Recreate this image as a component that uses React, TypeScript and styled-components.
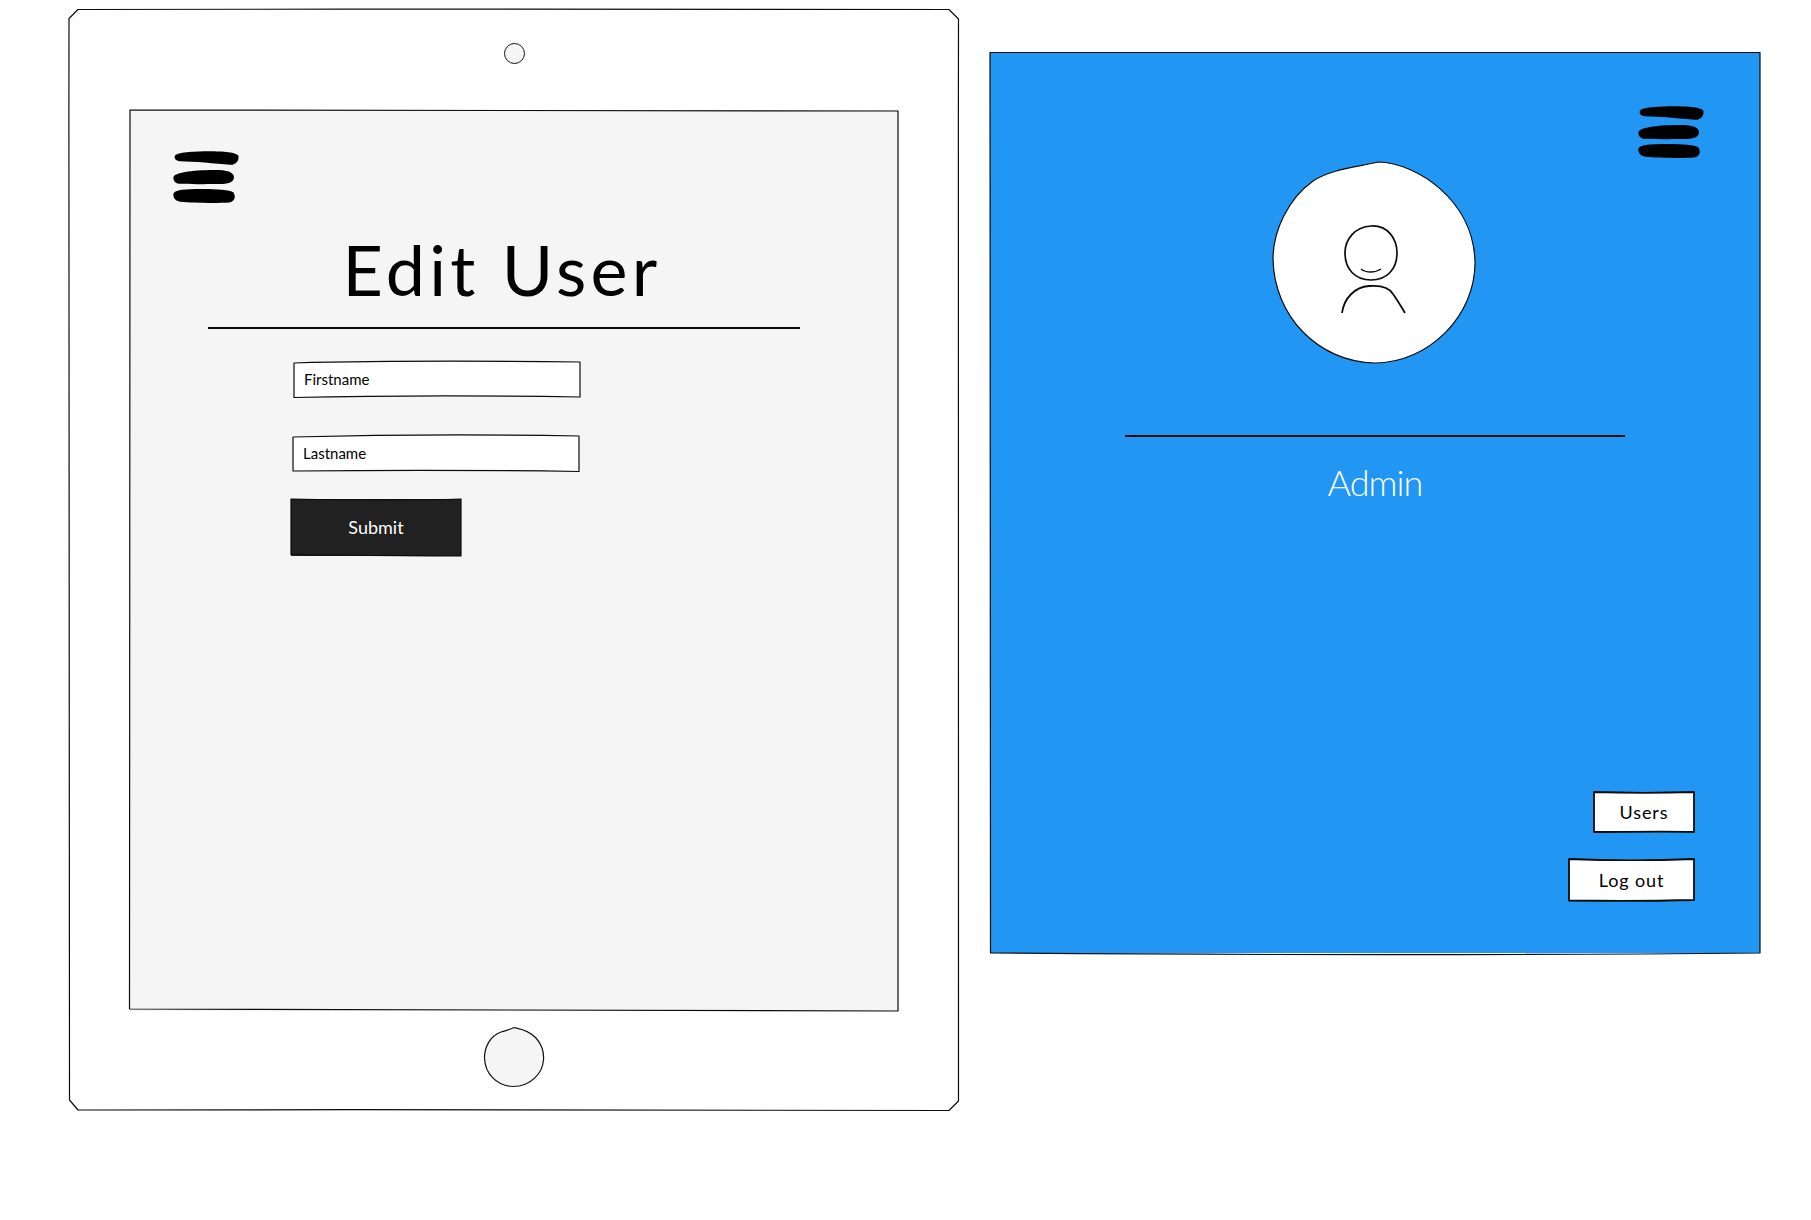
import React from 'react';
import styled, { createGlobalStyle } from 'styled-components';

const GlobalStyle = createGlobalStyle`
  html, body {
    margin: 0;
    background: #fff;
  }
  * {
    box-sizing: border-box;
  }
`;

const handFont = `Lato, 'Open Sans', sans-serif`;

const Page = styled.div`
  display: flex;
  align-items: flex-start;
  gap: 31px;
  width: 1811px;
  height: 1220px;
  padding: 9px 0 0 69px;
  font-family: ${handFont};
`;

const Tablet = styled.div`
  position: relative;
  display: flex;
  flex-direction: column;
  align-items: center;
  width: 890px;
  height: 1101px;
  padding-top: 34px;
`;

const Camera = styled.div`
  width: 21px;
  height: 21px;
  border: 1.2px solid #111;
  border-radius: 50%;
  background: #f5f5f5;
`;

const Screen = styled.div`
  position: relative;
  display: flex;
  flex-direction: column;
  width: 770px;
  height: 901px;
  margin-top: 46px;
  padding: 41px 0 0 44px;
  background: #f5f5f5;
`;

const HomeButton = styled.svg`
  width: 60px;
  height: 60px;
  margin-top: 16px;
  overflow: visible;
`;

const Outline = styled.svg<{ $weight?: number }>`
  position: absolute;
  top: 0;
  left: 0;
  width: 100%;
  height: 100%;
  overflow: visible;
  pointer-events: none;

  path {
    fill: none;
    stroke: #0c0c0c;
    stroke-width: ${(p) => p.$weight ?? 1.2};
    stroke-linejoin: round;
  }
`;

const MenuIcon = styled.svg<{ $end?: boolean }>`
  display: block;
  flex: none;
  width: 66px;
  height: 52px;
  align-self: ${(p) => (p.$end ? 'flex-end' : 'flex-start')};
  fill: #000;
`;

const Header = styled.div`
  width: 592px;
  margin: 24px 0 0 35px;
`;

const Title = styled.h1`
  margin: 0 0 16px;
  padding-right: 4px;
  font-size: 70px;
  line-height: 84px;
  font-weight: 400;
  letter-spacing: 4.3px;
  text-align: center;
  color: #000;
`;

const Rule = styled.div<{ $width: number }>`
  width: ${(p) => p.$width}px;
  height: 1.5px;
  background: #0c0c0c;
  flex: none;
`;

const Form = styled.form`
  display: flex;
  flex-direction: column;
  align-items: flex-start;
  margin: 33px 0 0 121px;
`;

const Field = styled.div<{ $shift?: number }>`
  position: relative;
  width: 286px;
  height: 35px;
  margin: 0 0 39px ${(p) => p.$shift ?? 0}px;
  background: #fff;
`;

const FieldInput = styled.input`
  display: block;
  width: 100%;
  height: 100%;
  padding: 0 10px;
  border: none;
  background: transparent;
  font-family: ${handFont};
  font-size: 15px;
  font-weight: 400;

  &::placeholder {
    color: #000;
    opacity: 1;
  }
`;

const Submit = styled.button`
  position: relative;
  width: 170px;
  height: 57px;
  margin: -11px 0 0 -3px;
  border: none;
  background: #212121;
  color: #fff;
  font-family: ${handFont};
  font-size: 18px;
  font-weight: 400;
`;

const Panel = styled.div`
  position: relative;
  display: flex;
  flex-direction: column;
  align-items: center;
  width: 770px;
  height: 901px;
  margin-top: 43px;
  padding: 54px 56px 52px 0;
  background: #2196f3;
`;

const Avatar = styled.svg`
  flex: none;
  width: 204px;
  height: 204px;
  margin: 3px -56px 0 0;
  overflow: visible;
`;

const PanelRule = styled(Rule)`
  margin: 70px -56px 0 0;
`;

const RoleName = styled.div`
  margin: 23px -56px 0 0;
  font-size: 36px;
  line-height: 44px;
  font-weight: 300;
  letter-spacing: -1px;
  color: #fff;
`;

const Actions = styled.div`
  display: flex;
  flex-direction: column;
  align-items: flex-end;
  gap: 27px;
  align-self: stretch;
  margin: auto 10px 0 0;
`;

const ActionButton = styled.button<{ $width: number; $height: number }>`
  position: relative;
  width: ${(p) => p.$width}px;
  height: ${(p) => p.$height}px;
  padding: 0;
  border: none;
  background: #fff;
  color: #000;
  font-family: ${handFont};
  font-size: 18px;
  letter-spacing: 0.9px;
`;

const Menu = ({ end }: { end?: boolean }) => (
  <MenuIcon $end={end} viewBox="0 0 66 52">
    <path d="M2 4.5C4 1.5 20 .2 36 .2 50 .3 64 1 65.5 5 66 10 63 14 57 13.8 43 12.5 20 10.5 7 10.3 2.5 10 .8 7 2 4.5Z" />
    <path d="M.5 26C1.5 22 18 19 40 19 53 18.8 61 20.5 61 26.500 60.500 31.500 55 33 46 33 30 33.200 14 33.300 6 32.800 2 32.300 0 29.500.5 26Z" />
    <path d="M.4 43C1 39.500 8 38.300 22 38 38 37.700 56 38 60.500 41.500 63 45 62 50.500 56 51.500 42 52.500 20 51.800 7 50.800 2.500 50 0 47 .4 43Z" />
  </MenuIcon>
);

const App: React.FC = () => {
  return (
    <>
      <GlobalStyle />
      <Page>
        <Tablet>
          <Outline>
            <path d="M9 .5C300 0 600 -.500 880 .5L889.500 10C889 400 889 800 889.500 1092L880 1101.500C600 1100.500 300 1100.500 9 1101L.5 1091C-.5 800 -.5 400 0 9.500Z" />
          </Outline>
          <Camera />
          <Screen>
            <Outline>
              <path d="M1 0C250 1 500 1.500 769 1C769 300 769.500 600 769 901C500 902.500 250 901.500 .500 899C1.500 600 1 300 1 0Z" />
            </Outline>
            <Menu />
            <Header>
              <Title>Edit User</Title>
              <Rule $width={592} />
            </Header>
            <Form>
              <Field>
                <FieldInput placeholder="Firstname" />
                <Outline>
                  <path d="M0 1C100 -1.500 200 -1 286 0L286 35C190 33.500 90 33.500 0 35.500Z" />
                </Outline>
              </Field>
              <Field $shift={-1}>
                <FieldInput placeholder="Lastname" />
                <Outline>
                  <path d="M0 1C100 -1.500 200 -1.500 286 0L286 35.500C190 34 90 34 0 35Z" />
                </Outline>
              </Field>
              <Submit type="button">
                Submit
                <Outline>
                  <path d="M0 0C60 1 120 1.500 170 0L170 57C110 56.500 50 56.500 0 55.500Z" />
                </Outline>
              </Submit>
            </Form>
          </Screen>
          <HomeButton viewBox="0 0 60 60">
            <path
              d="M30 .5C33 1.500 44 2 52 11 59 19 60 27 59.500 33 58.500 46 47 59.500 29 59.500 12 59 1 46 .500 31 .5 20 6 9 17 5 22 3.500 25 3 30 .5Z"
              fill="#f5f5f5"
              stroke="#111"
              strokeWidth="1.2"
            />
          </HomeButton>
        </Tablet>
        <Panel>
          <Outline>
            <path d="M0 .5C250 -.5 500 -.5 770 .5C769.500 300 770.500 600 770 901C500 903.500 250 903 .5 901C-2 600 -1.500 300 0 .5Z" />
          </Outline>
          <Menu end />
          <Avatar viewBox="0 0 204 204">
            <path
              d="M105 1C145 2 200 40 202 100 203 155 155 202 102 202 45 201 1 155 0 98 0 70 15 38 40 20 58 8 85 6 105 1Z"
              fill="#fff"
              stroke="#0c0c0c"
              strokeWidth="1.2"
            />
            <path
              d="M98 65C115 64 124 78 124 92 124 108 114 119 98 119 82 119 72 108 72 92 72 78 82 66 98 65Z"
              fill="none"
              stroke="#0c0c0c"
              strokeWidth="1.7"
            />
            <path d="M88 108C93 112 102 112 108 108" fill="none" stroke="#0c0c0c" strokeWidth="1.3" />
            <path
              d="M69 152C71 137 82 126 96 125 108 124 116 126 120 133 125 140 129 147 132 152"
              fill="none"
              stroke="#0c0c0c"
              strokeWidth="1.8"
            />
          </Avatar>
          <PanelRule $width={500} />
          <RoleName>Admin</RoleName>
          <Actions>
            <ActionButton $width={100} $height={40}>
              Users
              <Outline $weight={1.8}>
                <path d="M0 0C30 1 70 1 100 0L100 40C70 39 30 40 0 40Z" />
              </Outline>
            </ActionButton>
            <ActionButton $width={125} $height={42}>
              Log out
              <Outline $weight={1.8}>
                <path d="M0 0C40 1.500 85 1.500 125 0L125 41C85 42 40 42 0 41.500Z" />
              </Outline>
            </ActionButton>
          </Actions>
        </Panel>
      </Page>
    </>
  );
};

export default App;
